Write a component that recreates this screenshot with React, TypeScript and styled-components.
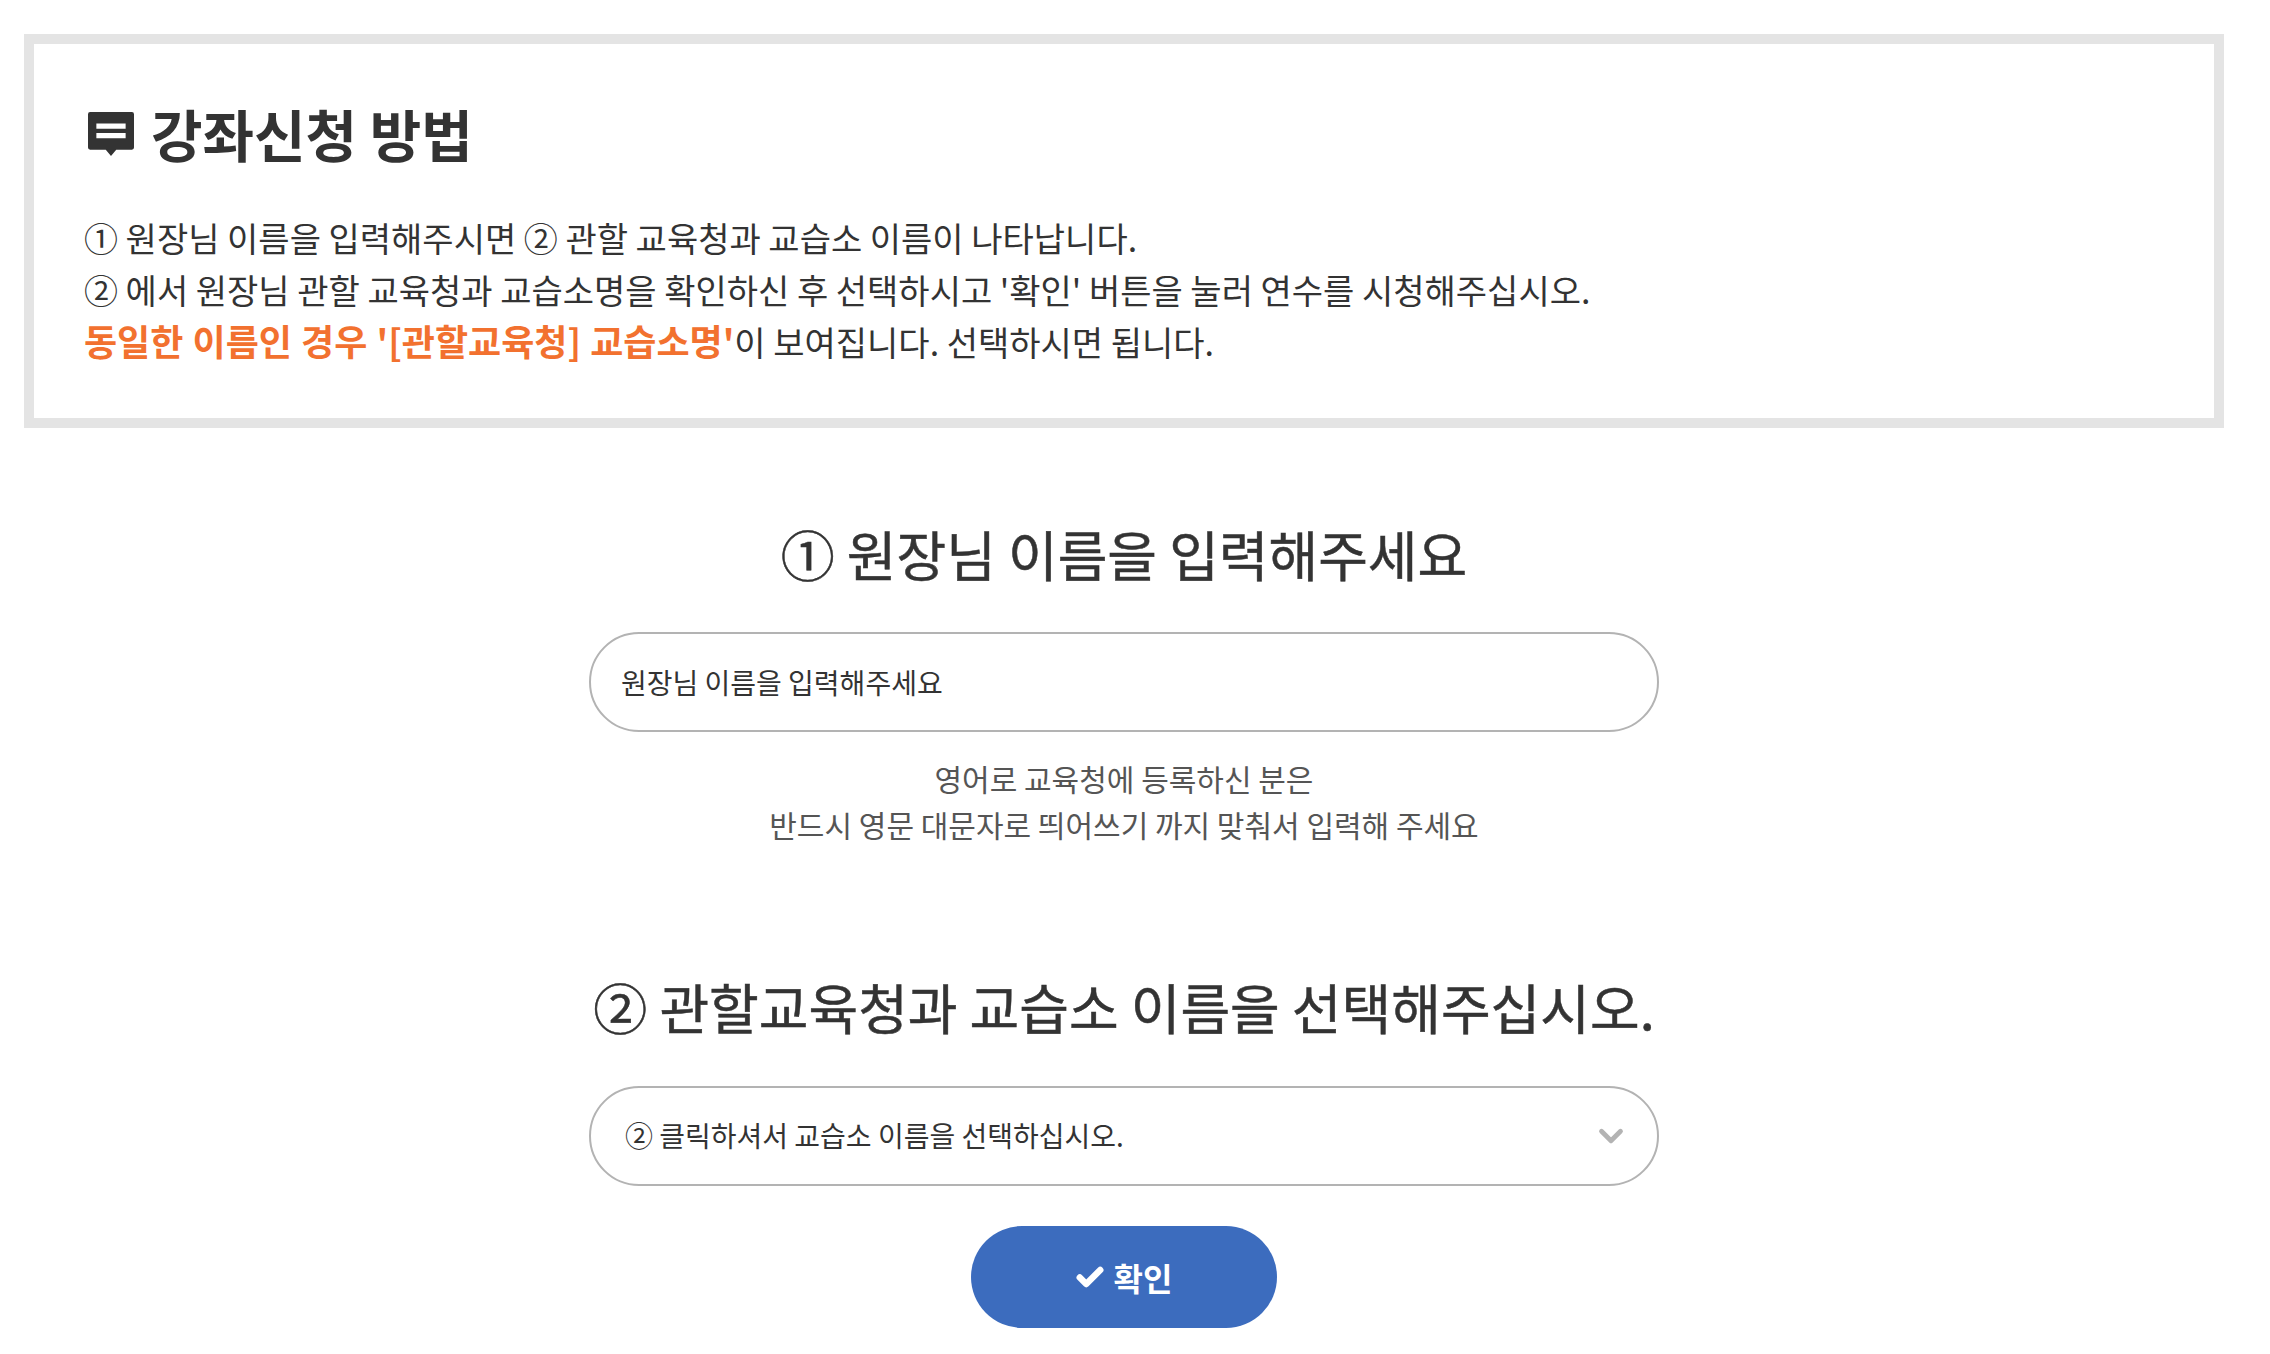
import styled, { createGlobalStyle } from 'styled-components'
import { ChevronDown } from 'lucide-react'

const GlobalStyle = createGlobalStyle`
  * { box-sizing: border-box; }
  html, body { margin: 0; background: #fff; }
  body { font-family: "Noto Sans CJK KR", "Noto Sans", sans-serif; color: #333; }
`

const Page = styled.div`
  width: 2200px;
  margin-left: 24px;
  padding: 34px 0 26px;
`

const GuideBox = styled.section`
  height: 394px;
  border: 10px solid #e4e4e4;
  padding: 49px 50px 0 50px;
`

const GuideTitle = styled.h2`
  display: flex;
  align-items: center;
  gap: 17px;
  margin: 0 0 39px 4px;
  font-size: 56px;
  line-height: 80px;
  font-weight: 700;
  color: #333;
`

const TitleIcon = styled.svg`
  width: 46px;
  height: 44px;
  margin-top: 2px;
`

const GuideLine = styled.p`
  margin: 0;
  font-size: 34px;
  line-height: 52px;
  color: #333;
`

const Accent = styled.strong`
  font-size: 36px;
  line-height: 1;
  font-weight: 700;
  word-spacing: 1px;
  color: #f2712f;
`

const Form = styled.form`
  display: flex;
  flex-direction: column;
  align-items: center;
`

const StepTitle = styled.h3<{ $top: number; $bottom: number }>`
  margin: ${p => p.$top}px 0 ${p => p.$bottom}px;
  font-size: 54px;
  line-height: 80px;
  font-weight: 400;
  -webkit-text-stroke: 0.5px #333;
  color: #333;
`

const NameInput = styled.input`
  width: 1070px;
  height: 100px;
  border: 2px solid #b3b3b3;
  border-radius: 50px;
  padding: 0 30px;
  font: inherit;
  font-size: 28px;
  color: #333;
  outline: none;
  &::placeholder { color: #333; opacity: 1; }
`

const Hint = styled.p`
  margin: 23px 0 0;
  font-size: 30px;
  line-height: 46px;
  text-align: center;
  color: #555;
`

const SelectBox = styled.div`
  width: 1070px;
  height: 100px;
  display: flex;
  align-items: center;
  justify-content: space-between;
  border: 2px solid #b3b3b3;
  border-radius: 50px;
  padding: 0 27px 0 34px;
  font-size: 28px;
  color: #333;
  svg { color: #b3b3b3; }
`

const SelectText = styled.span`
  padding-bottom: 3px;
`

const ConfirmButton = styled.button`
  display: flex;
  align-items: center;
  justify-content: center;
  gap: 10px;
  width: 306px;
  height: 102px;
  margin-top: 40px;
  border: 0;
  border-radius: 51px;
  background: #3c6cbe;
  color: #fff;
  font: inherit;
  font-size: 32px;
  font-weight: 700;
`

export default function App() {
  return (
    <>
      <GlobalStyle />
      <Page>
        <GuideBox>
          <GuideTitle>
            <TitleIcon viewBox="0 0 44 42" aria-hidden="true">
              <path fillRule="evenodd" fill="#333" d="M2 0h40a2 2 0 0 1 2 2v32a2 2 0 0 1-2 2H27l-5 6-5-6H2a2 2 0 0 1-2-2V2a2 2 0 0 1 2-2zM8 11v5h28v-5zM8 20v5h28v-5z" />
            </TitleIcon>
            강좌신청 방법
          </GuideTitle>
          <GuideLine>① 원장님 이름을 입력해주시면 ② 관할 교육청과 교습소 이름이 나타납니다.</GuideLine>
          <GuideLine>② 에서 원장님 관할 교육청과 교습소명을 확인하신 후 선택하시고 '확인' 버튼을 눌러 연수를 시청해주십시오.</GuideLine>
          <GuideLine><Accent>동일한 이름인 경우 '[관할교육청] 교습소명'</Accent>이 보여집니다. 선택하시면 됩니다.</GuideLine>
        </GuideBox>
        <Form>
          <StepTitle $top={86} $bottom={38}>① 원장님 이름을 입력해주세요</StepTitle>
          <NameInput placeholder="원장님 이름을 입력해주세요" />
          <Hint>영어로 교육청에 등록하신 분은<br />반드시 영문 대문자로 띄어쓰기 까지 맞춰서 입력해 주세요</Hint>
          <StepTitle $top={120} $bottom={39}>② 관할교육청과 교습소 이름을 선택해주십시오.</StepTitle>
          <SelectBox>
            <SelectText>② 클릭하셔서 교습소 이름을 선택하십시오.</SelectText>
            <ChevronDown size={38} strokeWidth={3} />
          </SelectBox>
          <ConfirmButton type="button">
            <svg width="28" height="22" viewBox="0 0 26 20" aria-hidden="true">
              <path fill="none" stroke="#fff" strokeWidth="6" strokeLinecap="round" strokeLinejoin="round" d="M3.5 10.5l6 6L22.5 3.5" />
            </svg>
            확인
          </ConfirmButton>
        </Form>
      </Page>
    </>
  )
}
